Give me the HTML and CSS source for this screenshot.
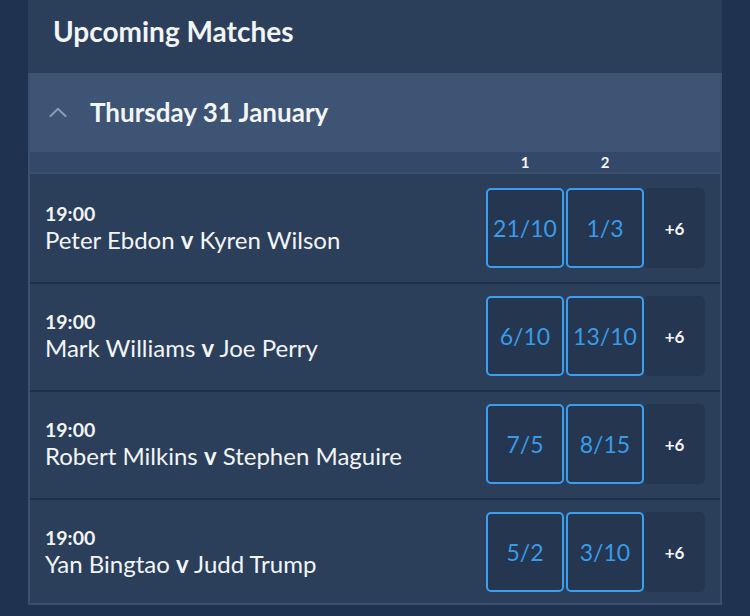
FILE: index.html
```html
<!DOCTYPE html>
<html lang="en">
<head>
<meta charset="utf-8">
<title>Upcoming Matches</title>
<link rel="stylesheet" href="styles.css">
</head>
<body>
<div class="panel">
  <h2 class="panel-title">Upcoming Matches</h2>
  <section class="group">
    <div class="group-head">
      <svg class="chevron" width="18" height="10" viewBox="0 0 18 10" aria-hidden="true">
        <path d="M1.5 9 L9 1.8 L16.5 9" fill="none" stroke="#8b9bb3" stroke-width="2" stroke-linecap="round" stroke-linejoin="round"/>
      </svg>
      <span class="group-date">Thursday 31 January</span>
    </div>
    <div class="cols">
      <span class="col-label">1</span>
      <span class="col-label">2</span>
      <span class="col-spacer"></span>
    </div>
    <div class="rows">
      <div class="row">
        <div class="match">
          <div class="time">19:00</div>
          <div class="teams">Peter Ebdon <b>v</b> Kyren Wilson</div>
        </div>
        <div class="prices">
          <button class="odd">21/10</button>
          <button class="odd">1/3</button>
          <button class="more">+6</button>
        </div>
      </div>
      <div class="row">
        <div class="match">
          <div class="time">19:00</div>
          <div class="teams">Mark Williams <b>v</b> Joe Perry</div>
        </div>
        <div class="prices">
          <button class="odd">6/10</button>
          <button class="odd">13/10</button>
          <button class="more">+6</button>
        </div>
      </div>
      <div class="row">
        <div class="match">
          <div class="time">19:00</div>
          <div class="teams">Robert Milkins <b>v</b> Stephen Maguire</div>
        </div>
        <div class="prices">
          <button class="odd">7/5</button>
          <button class="odd">8/15</button>
          <button class="more">+6</button>
        </div>
      </div>
      <div class="row">
        <div class="match">
          <div class="time">19:00</div>
          <div class="teams">Yan Bingtao <b>v</b> Judd Trump</div>
        </div>
        <div class="prices">
          <button class="odd">5/2</button>
          <button class="odd">3/10</button>
          <button class="more">+6</button>
        </div>
      </div>
    </div>
  </section>
</div>
</body>
</html>
```
FILE: styles.css
```css
* {
  box-sizing: border-box;
}

html,
body {
  margin: 0;
  height: 100%;
}

body {
  background: #1f3250;
  font-family: Lato, "Open Sans", sans-serif;
  color: #f2f5f8;
  overflow: hidden;
}

.panel {
  margin-left: 28px;
  width: 694px;
  background: #2b3f5b;
}

.panel-title {
  margin: 0;
  height: 73px;
  padding: 14px 0 0 25px;
  font-size: 28px;
  font-weight: 700;
  line-height: 34px;
}

.group {
  border: 2px solid #3b5172;
  border-top: 0;
}

.group-head {
  display: flex;
  align-items: center;
  height: 79px;
  background: #3e5475;
  padding-left: 19px;
}

.chevron {
  display: block;
  margin-top: -1px;
}

.group-date {
  margin-left: 23px;
  font-size: 26px;
  font-weight: 700;
  line-height: 32px;
  margin-top: -2px;
}

.cols {
  display: flex;
  justify-content: flex-end;
  height: 22px;
  background: #34496a;
  border-bottom: 2px solid #3b4f6e;
  padding-right: 15px;
}

.col-label {
  width: 78px;
  margin-left: 2px;
  text-align: center;
  font-size: 15px;
  font-weight: 700;
  line-height: 20px;
}

.col-spacer {
  width: 61px;
}

.row {
  display: flex;
  align-items: center;
  justify-content: space-between;
  padding: 12px 15px 14px 15px;
}

.row:first-child {
  padding-top: 14px;
}

.row:last-child {
  padding-bottom: 11px;
}

.row + .row {
  border-top: 2px solid #1e2f47;
}

.match {
  margin-top: 2px;
}

.time {
  font-size: 19.5px;
  font-weight: 700;
  line-height: 22px;
}

.teams {
  font-size: 24px;
  line-height: 30px;
}

.teams b {
  font-weight: 700;
}

.prices {
  display: flex;
  align-items: stretch;
}

.odd,
.more {
  font-family: inherit;
  height: 80px;
  border-radius: 5px;
  background: #243650;
  padding: 0;
  margin: 0;
}

.odd {
  width: 78px;
  margin-right: 2px;
  border: 2px solid #3b9eef;
  color: #3a9be8;
  font-size: 23px;
}

.odd:nth-child(2) {
  margin-right: 0;
}

.more {
  width: 61px;
  border: 0;
  color: #f2f5f8;
  font-size: 17px;
  font-weight: 700;
}
```
